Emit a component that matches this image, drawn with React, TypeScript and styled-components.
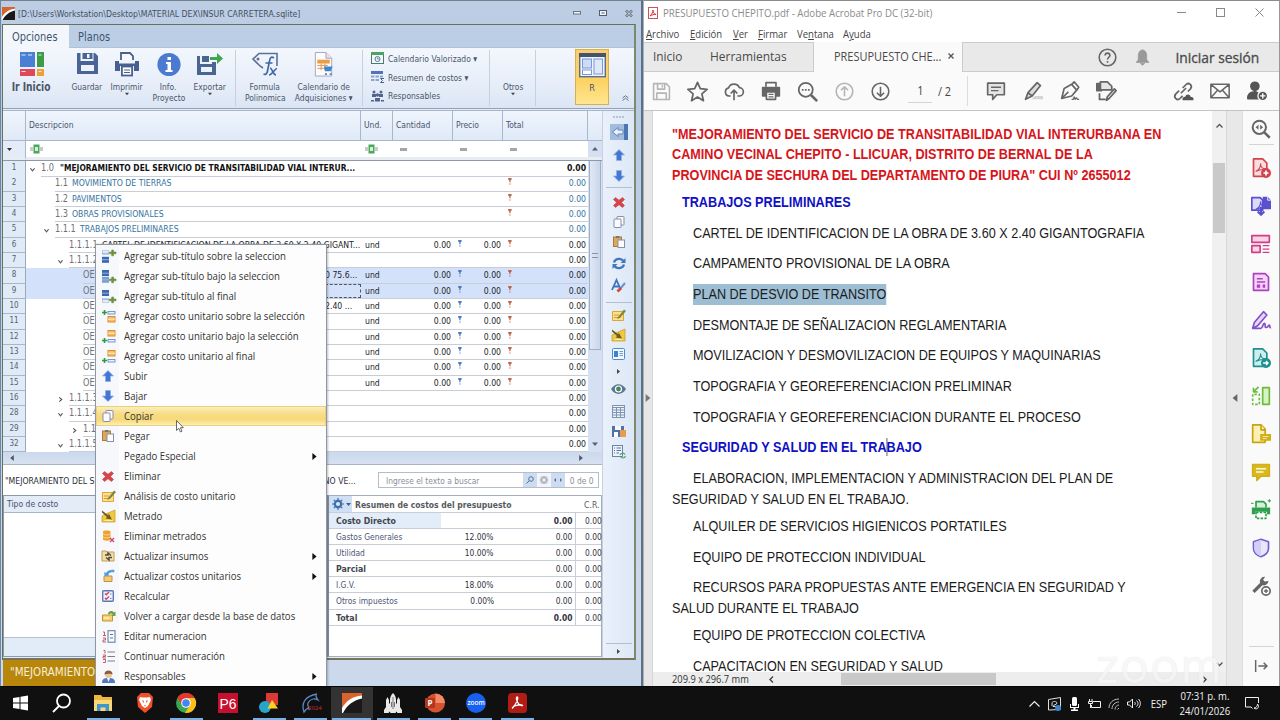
import React from "react";
import styled, { createGlobalStyle, css } from "styled-components";

const tahoma = `"DejaVu Sans Condensed", "DejaVu Sans", sans-serif`;
const segoe = `"Open Sans", "Noto Sans", sans-serif`;
const arial = `"Liberation Sans", Arial, sans-serif`;

const GlobalStyle = createGlobalStyle`
  * { box-sizing: border-box; }
  body { margin: 0; overflow: hidden; background: #101010; }
  svg { display: block; flex-shrink: 0; overflow: visible; }
`;

/* Text */
const Txt = styled.span<{ $k?: number; $from?: string }>`
  display: inline-block;
  white-space: nowrap;
  transform: scaleX(${(p) => p.$k ?? 0.91});
  transform-origin: ${(p) => p.$from ?? "left"} center;
`;

/* Screen */
const Screen = styled.div`
  width: 1280px;
  height: 720px;
  display: grid;
  grid-template-columns: 643px 637px;
  grid-template-rows: 686px 34px;
  overflow: hidden;
  position: relative;
`;

/* ---------- Budget window ---------- */
const BudgetWindow = styled.section`
  height: 686px;
  overflow: hidden;
  border-right: 2px solid #5c7088;
  border-left: 1px solid #6c86a6;
  border-top: 1px solid #73828f;
  background: linear-gradient(#bccde4, #b9cbe2 120px, #cdd9ea 600px, #cbd9ec);
  font-family: ${tahoma};
  font-size: 9.5px;
  color: #2b2f38;
`;
const BudgetTitle = styled.header`
  height: 23px;
  display: flex;
  align-items: center;
  padding: 1px 8px 0 1px;
  gap: 3px;
  color: #45505f;
`;
const TitleText = styled.div`
  flex: 1;
  font-size: 9.5px;
`;
const WinButtons = styled.div`
  display: flex;
  gap: 18px;
  align-items: center;
`;
const Frame = styled.div`
  width: 634px;
  height: 636px;
  margin-left: 1px;
  border: 1px solid #66735a;
  border-right: 2px solid #7d8a70;
  border-bottom: 2px solid #76745a;
  background: #e3ecf8;
  overflow: hidden;
`;
const TabStrip = styled.nav`
  height: 23px;
  display: flex;
  background: #bccee6;
  border-bottom: 1px solid #b0c2da;
  font-size: 12px;
`;
const Tab = styled.div<{ $active?: boolean }>`
  height: 23px;
  width: ${(p) => (p.$active ? 66 : 60)}px;
  padding: 5px 0 0 9px;
  line-height: 15px;
  color: #3f5570;
  background: ${(p) => (p.$active ? "#f3f7fc" : "transparent")};
`;
const Ribbon = styled.div`
  height: 61px;
  display: flex;
  background: linear-gradient(#f3f7fd, #e7eef9 60%, #dbe5f4);
  border-bottom: 1px solid #94a2b8;
  color: #4a5568;
`;
const RibbonButton = styled.div<{ $w: number; $ml?: number; $bold?: boolean }>`
  width: ${(p) => p.$w}px;
  margin-left: ${(p) => p.$ml ?? 0}px;
  padding-top: 4px;
  display: flex;
  flex-direction: column;
  align-items: center;
  font-size: ${(p) => (p.$bold ? 11.5 : 9.2)}px;
  font-weight: ${(p) => (p.$bold ? "bold" : "normal")};
  line-height: 11px;
  text-align: center;
  > svg:first-child { margin-bottom: ${(p) => (p.$bold ? 5 : 4)}px; }
`;
const Divider = styled.i<{ $ml?: number }>`
  width: 1px;
  height: 56px;
  margin: 2px 0 0 ${(p) => p.$ml ?? 0}px;
  background: #c5d0e0;
`;
const RibbonList = styled.div`
  width: 118px;
  margin-left: 8px;
  padding-top: 1px;
`;
const RibbonListItem = styled.div`
  height: 18.7px;
  display: flex;
  align-items: center;
  gap: 4px;
  font-size: 9.3px;
`;
const ViewButton = styled.div`
  width: 34px;
  height: 56px;
  margin: 1px 0 0 39px;
  padding-top: 3px;
  display: flex;
  flex-direction: column;
  align-items: center;
  gap: 5px;
  border: 1px solid #dcae4c;
  background: linear-gradient(#f8cf70, #fbd263 55%, #ffe68f);
  font-size: 9px;
`;
const Collapse = styled.div`
  margin: 47px 0 0 13px;
`;
const Work = styled.div`
  height: 551px;
  display: flex;
  border-top: 1px solid #a8b5c8;
  margin-top: 1px;
`;
const WorkLeft = styled.div`
  width: 599px;
`;

/* Grid of budget items */
const cols = "23px 335px 32px 60px 50px 85px 14px";
const GridHead = styled.div`
  height: 30px;
  display: grid;
  grid-template-columns: ${cols};
  background: linear-gradient(#eff5fd, #dfe9f7);
  border-bottom: 1px solid #a9b7cb;
  color: #47536a;
`;
const HeadCell = styled.div`
  padding: 8px 0 0 3px;
  line-height: 12px;
  border-right: 1px solid #a9b7cb;
  overflow: hidden;
  font-size: 9.3px;
`;
const FilterRow = styled.div`
  height: 20px;
  display: grid;
  grid-template-columns: ${cols};
  background: #fff;
  border-bottom: 1px solid #8f98a5;
  > div {
    padding: 3px 0 0 4px;
    border-bottom: 3px solid #e8edf4;
  }
  > div:first-child {
    padding-top: 6px;
    background: #e3ecf8;
    border-right: 1px solid #a9b7cb;
  }
  > div:last-child { background: #d5e1f2; padding: 0; }
`;
const Dash = styled.i`
  display: block;
  width: 7px;
  height: 3px;
  margin: 4px 0 0 3px;
  background: #a2a7ad;
`;
const GridBody = styled.div`
  height: 291px;
  display: flex;
  background: #fff;
  overflow: hidden;
`;
const Rows = styled.div`
  width: 585px;
`;
const Row = styled.div<{ $sel?: boolean; $bold?: boolean; $blue?: boolean }>`
  height: 15.33px;
  display: grid;
  grid-template-columns: 23px 335px 32px 60px 50px 85px;
  line-height: 14.5px;
  background: ${(p) => (p.$sel ? "#d3e2fa" : "#fff")};
  color: ${(p) => (p.$blue ? "#35749f" : "#23252a")};
  ${(p) =>
    p.$bold &&
    css`
      font-weight: bold;
      color: #111;
    `}
`;
const RowNum = styled.div`
  background: #e1eaf7;
  border-right: 1px solid #9aa9bf;
  border-bottom: 1px solid #a9b7cb;
  color: #56626f;
  font-size: 8px;
  font-weight: normal;
  text-align: center;
`;
const Desc = styled.div<{ $indent: number }>`
  min-width: 0;
  display: flex;
  padding-left: ${(p) => p.$indent - 12}px;
  overflow: hidden;
`;
const Arrow = styled.div`
  width: 12px;
  padding: 6px 0 0 1px;
`;
const DescLine = styled.div`
  flex: 1;
  min-width: 0;
  display: flex;
  border-bottom: 1px solid #c9ced6;
`;
const Code = styled.span<{ $w: number }>`
  width: ${(p) => p.$w}px;
  flex-shrink: 0;
  color: #707276;
  font-weight: normal;
  font-size: 10px;
`;
const Cell = styled.div<{ $right?: boolean }>`
  padding: 0 2px 0 4px;
  border-bottom: 1px solid #c9ced6;
  display: flex;
  justify-content: ${(p) => (p.$right ? "space-between" : "flex-start")};
  > svg { margin: 2px 0 0 1px; }
`;
const Tail = styled.div<{ $focus?: boolean }>`
  width: 36px;
  height: 14.5px;
  margin-left: auto;
  ${(p) => p.$focus && "border: 1px dashed #4a5568; border-left: 0;"}
`;
const VScroll = styled.div`
  width: 14px;
  height: 291px;
  background: #d5e1f2;
  display: flex;
  flex-direction: column;
  align-items: center;
  justify-content: space-between;
`;
const VThumb = styled.div`
  width: 12px;
  height: 189px;
  display: flex;
  align-items: center;
  justify-content: center;
  background: linear-gradient(90deg, #dfe8f6, #c9d6ea);
  border: 1px solid #9fb0c9;
  border-top: 0;
`;
const Grip = styled.i`
  width: 6px;
  height: 5px;
  border: solid #8393ad;
  border-width: 1px 0;
`;
const HScroll = styled.div`
  height: 13px;
  display: flex;
  justify-content: space-between;
  align-items: center;
  padding: 0 18px 0 6px;
  background: linear-gradient(#cbd9ed, #d7e1f0);
  border-bottom: 1px solid #a9b4c4;
`;

/* Search strip and bottom panels */
const SearchRow = styled.div`
  height: 30px;
  background: #fff;
  display: flex;
  align-items: center;
  padding-left: 2px;
  font-size: 9.5px;
`;
const SearchTitle = styled.div`
  width: 373px;
  display: flex;
`;
const SearchBox = styled.div`
  width: 221px;
  height: 16px;
  display: flex;
  align-items: center;
  border: 1px solid #b4bdc9;
  color: #8a8f96;
  font-size: 9.2px;
`;
const SearchInput = styled.div`
  width: 144px;
  padding-left: 7px;
`;
const SearchBtn = styled.div<{ $on?: boolean }>`
  width: 14px;
  height: 14px;
  display: grid;
  place-items: center;
  background: ${(p) => (p.$on ? "#cddcf0" : "#f1f4f8")};
`;
const Panels = styled.div`
  display: flex;
  height: 162px;
`;
const CostType = styled.div`
  width: 325px;
  height: 162px;
  background: #fff;
  border: 1px solid #8c99ab;
  display: flex;
  flex-direction: column;
  justify-content: space-between;
`;
const CostTypeHead = styled.div`
  height: 17px;
  line-height: 15px;
  padding-left: 3px;
  background: #e4ecf8;
  border-bottom: 1px solid #a9b7cb;
  color: #47536a;
  font-size: 9.4px;
`;
const CostTypeFoot = styled.div`
  height: 19px;
  background: #e2ebf8;
  border-top: 1px solid #b6bfcc;
`;
const Summary = styled.div`
  width: 274px;
  height: 162px;
  background: #fff;
  border: 1px solid #a4afbd;
  border-left: 1px solid #8793a3;
`;
const SummaryHead = styled.div`
  height: 17px;
  display: flex;
  align-items: center;
  border-bottom: 1px solid #c9ced6;
  color: #555a61;
`;
const SummaryTitle = styled.div`
  width: 230px;
  margin-left: 3px;
  font-weight: bold;
`;
const SummaryName = styled.b`
  display: inline-block;
  transform: scaleX(0.95);
  transform-origin: left center;
  color: #42464c;
`;
const Gear = styled.div`
  width: 23px;
  height: 16px;
  display: flex;
  align-items: center;
  gap: 2px;
  padding-left: 3px;
  background: #cfdff4;
`;
const SummaryRow = styled.div<{ $first?: boolean }>`
  height: 16.1px;
  display: grid;
  grid-template-columns: 112px 53px 82px 26px;
  line-height: 15px;
  border-bottom: 1px solid #c9ced6;
  font-size: 9.2px;
  color: #30353d;
  > div { overflow: hidden; }
  > div:first-child {
    padding-left: 7px;
    color: #4b5577;
    background: ${(p) => (p.$first ? "#e3ecf9" : "#fff")};
  }
  > div:nth-child(2), > div:nth-child(3) { text-align: right; }
  > div:nth-child(3) {
    padding-right: 3px;
    border-right: 1px solid #c9ced6;
  }
  > div:last-child { padding-left: 9px; }
`;
const SideBar = styled.aside`
  width: 32px;
  height: 548px;
  padding-top: 3px;
  background: linear-gradient(90deg, #eaf1fb, #dde7f6);
  border-left: 1px solid #c5d1e2;
  display: flex;
  flex-direction: column;
  align-items: center;
`;
const SideSlot = styled.div<{ $h: number; $line?: boolean }>`
  width: 26px;
  height: ${(p) => p.$h}px;
  flex-shrink: 0;
  display: grid;
  place-items: center;
  border-bottom: ${(p) => (p.$line ? "1px solid #b3bfd1" : "0")};
`;
const StatusBar = styled.footer`
  width: 310px;
  height: 26px;
  margin: 0 0 0 2px;
  padding: 5px 0 0 7px;
  background: #b8860b;
  color: #f7efd9;
  font-size: 12px;
`;

/* ---------- Context menu ---------- */
const Menu = styled.ul`
  position: absolute;
  left: 95px;
  top: 244px;
  width: 232px;
  height: 442px;
  margin: 0;
  padding: 1px 0 0;
  list-style: none;
  background: linear-gradient(90deg, #f6f8fb 23px, #fdfdfd 23px);
  border: 1px solid #8d97a5;
  border-bottom: 0;
  box-shadow: 1px 0 2px rgba(0, 0, 0, 0.25);
  font-family: ${segoe};
  font-size: 10.6px;
  color: #333;
`;
const MenuItem = styled.li<{ $hot?: boolean }>`
  height: 20px;
  display: flex;
  align-items: center;
  padding: 0 7px 0 5px;
  border: 1px solid transparent;
  > span { flex: 1; min-width: 0; }
  ${(p) =>
    p.$hot &&
    css`
      border-color: #e9cf7e;
      background: linear-gradient(#fbeebb, #f8dc85 40%, #f6d978 70%, #fdeeb4);
    `}
`;
const MenuIcon = styled.div`
  width: 21.5px;
  height: 16px;
  flex-shrink: 0;
  display: flex;
  align-items: center;
`;
const Pointer = styled.svg`
  position: absolute;
  left: 176px;
  top: 420px;
`;

/* ---------- Acrobat window ---------- */
const Acrobat = styled.section`
  height: 686px;
  overflow: hidden;
  background: #fff;
  border-left: 1px solid #a9b0b8;
  border-right: 1px solid #979797;
  border-top: 1px solid #8b8b8b;
  font-family: ${segoe};
  color: #444;
  display: flex;
  flex-direction: column;
`;
const AcroTitle = styled.header`
  height: 24px;
  display: flex;
  align-items: center;
  padding: 0 15px 1px 4px;
  gap: 5px;
  font-size: 11px;
  color: #8b8b8b;
  > span { flex: 1; }
`;
const AcroWin = styled.div`
  display: flex;
  align-items: center;
  gap: 30px;
`;
const AcroMenu = styled.nav`
  height: 17px;
  padding-left: 2px;
  display: grid;
  grid-template-columns: 44px 43px 25px 39px 46px 60px;
  line-height: 18px;
  font-size: 10.5px;
  color: #444;
`;
const AcroTabs = styled.nav`
  height: 30px;
  display: flex;
  align-items: center;
  background: #e9e9e9;
  border-top: 1px solid #cbcbcb;
  border-bottom: 1px solid #cbcbcb;
  font-size: 13px;
  color: #4a4a4a;
`;
const AcroTab = styled.div<{ $w: number; $pad: number; $active?: boolean }>`
  width: ${(p) => p.$w}px;
  height: 30px;
  padding: 0 0 2px ${(p) => p.$pad}px;
  display: flex;
  align-items: center;
  ${(p) =>
    p.$active &&
    css`
      background: #fafafa;
      border-left: 1px solid #cbcbcb;
      border-right: 1px solid #cbcbcb;
      font-size: 12.4px;
    `}
`;
const TabName = styled.div`
  width: 114px;
`;
const SignIn = styled.div`
  margin-left: 15px;
  font-size: 13.8px;
  -webkit-text-stroke: 0.3px #4a4a4a;
`;
const AcroTools = styled.div`
  height: 39px;
  display: flex;
  align-items: center;
  background: #fafafa;
  border-bottom: 1px solid #c4c4c4;
  font-size: 12px;
`;
const Tool = styled.div<{ $ml?: number }>`
  width: 36.6px;
  margin-left: ${(p) => p.$ml ?? 0}px;
  display: grid;
  place-items: center;
`;
const PageNo = styled.div`
  width: 24px;
  height: 24px;
  margin-left: 9px;
  line-height: 24px;
  text-align: center;
  border-bottom: 1px solid #d4d4d4;
`;
const PageTotal = styled.div`
  width: 17px;
  margin-left: 6px;
`;
const ToolDivider = styled.i`
  width: 1px;
  height: 30px;
  margin-left: 12px;
  background: #dcdcdc;
`;
const AcroBody = styled.div`
  flex: 1;
  display: flex;
  min-height: 0;
`;
const NavStrip = styled.div`
  width: 9px;
  background: #e6e6e6;
  border-right: 1px solid #d5d5d5;
  padding-top: 283px;
`;
const PageArea = styled.div`
  width: 573px;
`;
const PageRow = styled.div`
  height: 561px;
  display: flex;
  overflow: hidden;
`;
const Page = styled.article`
  width: 559px;
  padding: 13.8px 0 0 19px;
  background: #fff;
  font-family: ${arial};
  color: #1c1c1c;
`;
const Line = styled.p<{ $tone?: "red" | "blue"; $gap?: number; $in?: number }>`
  width: 600px;
  height: 20.4px;
  margin: ${(p) => p.$gap ?? 0}px 0 0;
  padding-left: ${(p) => p.$in ?? 0}px;
  font-size: 13.8px;
  line-height: 20.4px;
  white-space: nowrap;
  ${(p) => p.$tone === "red" && "color: #d8141a; font-weight: bold;"}
  ${(p) => p.$tone === "blue" && "color: #1010c4; font-weight: bold;"}
`;
const Marked = styled.mark`
  padding: 3px 0;
  background: #9dbdd3;
  color: inherit;
`;
const Caret = styled.i`
  display: inline-block;
  width: 1px;
  height: 18px;
  margin: 0 -1px -4px 0;
  vertical-align: baseline;
  background: #555;
`;
const PageScroll = styled.div`
  width: 14px;
  display: flex;
  flex-direction: column;
  align-items: center;
  background: #f0f0f0;
  padding: 12px 0 5px;
`;
const PageThumb = styled.div`
  width: 12px;
  height: 70px;
  margin: 35px 0 auto;
  background: #c9c9c9;
`;
const SizeRow = styled.footer`
  height: 14px;
  display: flex;
  align-items: center;
  background: #ededed;
  font-size: 10.5px;
  color: #333;
`;
const SizeText = styled.div`
  width: 116px;
  padding-left: 19px;
`;
const SizeThumb = styled.div`
  width: 155px;
  height: 12px;
  margin: 0 206px 0 67px;
  background: #c9c9c9;
`;
const Gutter = styled.div`
  width: 16px;
  background: #e8e8e8;
  border-left: 1px solid #d8d8d8;
  padding: 283px 0 0 4px;
`;
const ToolRail = styled.aside`
  flex: 1;
  background: #fafafa;
  border-left: 1px solid #dedede;
  display: flex;
  flex-direction: column;
  align-items: center;
`;
const RailSlot = styled.div`
  height: 38px;
  width: 25px;
  display: grid;
  place-items: center;
  flex-shrink: 0;
  &:first-child { border-bottom: 1px solid #d4d4d4; height: 34px; padding-top: 3px; margin-bottom: 4px; }
  &:last-child { border-top: 1px solid #d4d4d4; margin-top: 41px; }
`;
const Watermark = styled.div`
  position: absolute;
  left: 1096px;
  top: 638px;
  height: 47px;
  overflow: hidden;
  font: 50px/52px "Lato", sans-serif;
  letter-spacing: 2px;
  color: rgba(255, 255, 255, 0.75);
  text-shadow: 0 0 1px rgba(120, 120, 120, 0.25);
`;

/* ---------- Taskbar ---------- */
const Taskbar = styled.footer`
  grid-column: 1 / 3;
  background: #101010;
  border-top: 1px solid #060606;
  display: flex;
  color: #f2f2f2;
  font-family: ${segoe};
`;
const Task = styled.div<{ $open?: boolean; $hot?: boolean }>`
  width: 41.4px;
  height: 33px;
  display: flex;
  flex-direction: column;
  align-items: center;
  padding-top: 6px;
  justify-content: space-between;
  background: ${(p) => (p.$hot ? "#333" : "transparent")};
  &::after {
    content: "";
    width: ${(p) => (p.$hot ? "39px" : "33px")};
    height: 2px;
    background: ${(p) => (p.$open ? "#76b1e8" : "transparent")};
  }
`;
const Tray = styled.div`
  margin-left: auto;
  padding-right: 14px;
  display: flex;
  align-items: center;
  font-size: 10.5px;
`;
const TrayIcon = styled.div<{ $w: number }>`
  width: ${(p) => p.$w}px;
  display: grid;
  place-items: center;
`;
const Clock = styled.div`
  width: 64px;
  line-height: 15px;
  text-align: center;
  padding-top: 1px;
`;

/* ---------- Icons ---------- */
const Tri = ({ d = "down", s = 5, c = "#444" }: { d?: string; s?: number; c?: string }) => {
  const r: Record<string, number> = { down: 0, left: 90, up: 180, right: 270 };
  return (
    <svg width={s} height={s} viewBox="0 0 10 10">
      <path d="M0 2h10L5 8z" fill={c} transform={`rotate(${r[d]} 5 5)`} />
    </svg>
  );
};
const Chev = ({ open }: { open?: boolean }) => (
  <svg width="5" height="5" viewBox="0 0 6 6" fill="none" stroke="#555" strokeWidth="1.4">
    <path d={open ? "M.5 1.5 3 4.5 5.5 1.5" : "M1.5 .5 4.5 3 1.5 5.5"} />
  </svg>
);
const Pin = ({ c }: { c: string }) => (
  <svg width="4" height="7" viewBox="0 0 4 7">
    <path d="M.2 0h3.400v1.500L2.500 2.500v1.800h-1.200V2.500L.2 1.500zM1.300 5.400h1.200v1.200H1.300z" fill={c} opacity=".9" />
  </svg>
);
const AbcIcon = () => (
  <svg width="13" height="10" viewBox="0 0 13 10">
    <path d="M0 4h3M0 6h3M10 4h3M10 6h3" stroke="#8a9a8d" />
    <rect x="3.5" y=".5" width="6" height="9" fill="#4aa65a" />
    <rect x="5" y="3" width="3" height="4" fill="#d9f0dc" />
  </svg>
);
const InsurLogo = ({ s = 13 }: { s?: number }) => (
  <svg width={s} height={s} viewBox="0 0 20 20">
    <rect width="20" height="20" fill="#1a1818" />
    <path d="M0 0h20v3C11 4 4 9 0 16z" fill="#d9632a" />
    <path d="M0 15C4 8 11 3 20 2.500v3C12 7 5 12 1 20H0z" fill="#fff" />
  </svg>
);
const SaveIcon = () => (
  <svg width="21" height="25" viewBox="0 -1 21 25">
    <path d="M0 0h3.500v8h13V0H18l3 3v18H0zM4 12v6h13v-6z" fill="#4a6494" fillRule="evenodd" />
    <path d="M5.500 0h10v6h-10zM10 1v4h2.500V1z" fill="#4a6494" fillRule="evenodd" />
  </svg>
);
const PrintIcon = () => (
  <svg width="24" height="25" viewBox="0 0 24 25">
    <path d="M6 8V1h9l3 3v4" fill="#f5f8fd" stroke="#4a5f8c" strokeWidth="1.8" />
    <path d="M0 9h4v2.500h16V9h4v10h-5v-5H5v5H0z" fill="#46608f" />
    <rect x="6.900" y="14.500" width="10.200" height="9" fill="#fff" stroke="#4a5f8c" strokeWidth="1.8" />
    <path d="M9 18h6M9 20.500h6" stroke="#4a5f8c" />
  </svg>
);
const InfoIcon = () => (
  <svg width="24" height="25" viewBox="0 0 24 25">
    <circle cx="12" cy="12.500" r="11.600" fill="#4b7bd1" />
    <path d="M10.500 5h3.500v3h-3.500zM9 10h5v8h1.500v2h-7v-2h2v-6H9z" fill="#fff" />
  </svg>
);
const ExportIcon = () => (
  <svg width="26" height="25" viewBox="0 0 26 25">
    <path d="M0 4h3v8h12v-2h4v13H0zM4 15v5h11v-5zM5 4h7v6H5z" fill="#4a6494" fillRule="evenodd" />
    <path d="M13 5h7V1l6 5.500-6 5.500V8h-7z" fill="#3fa64c" />
  </svg>
);
const HomeTiles = () => (
  <svg width="24" height="25" viewBox="0 0 24 25">
    <path d="M0 0h15v15H0z" fill="#4b7fd6" />
    <path d="M17 0h7v15h-7z" fill="#3f9c46" />
    <path d="M0 17h15v7H0z" fill="#e0475b" />
    <path d="M17 17h7v7h-7z" fill="#f0a033" />
    <path d="M1.500 3h4M8 3h4M18.500 3h3M1.500 19.500h4M18.500 19.500h3" stroke="#dfe9fb" strokeWidth="1.2" />
  </svg>
);
const FormulaIcon = () => (
  <svg width="26" height="25" viewBox="0 0 26 25">
    <path d="M11 16 8 14 1 7l6-5.500h18V14" fill="none" stroke="#5c7196" strokeWidth="1.6" />
    <circle cx="6" cy="7" r="1.500" fill="#5c7196" />
    <path d="M22 6c-3-2-4 0-4.500 3L15.500 19c-.5 3-2 4-4 3M13.500 11h7M18 16c2 0 3 7 6 7M25 16.500c-2 0-5 6.500-8 6.500" fill="none" stroke="#3f68a8" strokeWidth="1.7" />
  </svg>
);
const CalendarDoc = () => (
  <svg width="24" height="25" viewBox="0 0 24 26">
    <path d="M3 .5h11l6 6V25H3z" fill="#fbfbfd" stroke="#a9a3b4" />
    <path d="M14 .5v6h6" fill="#e5e2ec" stroke="#a9a3b4" />
    <path d="M5 8h13v4H5z" fill="#eb9d3f" />
    <path d="M5 14h11M5 17h8M9 12v7M13 12v7" stroke="#d99a55" />
    <path d="M12 15h9l-2 5h-6zM13 22h2v2h-2zM18 22h2v2h-2z" fill="#3f86cf" />
  </svg>
);
const ValorizadoIcon = () => (
  <svg width="13" height="12" viewBox="0 0 13 12">
    <rect x=".5" y=".5" width="12" height="11" fill="#f4f9f6" stroke="#4c7a72" />
    <path d="M0 0h13v3H0z" fill="#4aa364" />
    <circle cx="6.500" cy="7" r="2.500" fill="none" stroke="#5577a8" />
    <path d="M6.500 5.500V7H8" stroke="#5577a8" fill="none" strokeWidth=".8" />
  </svg>
);
const ResumenIcon = () => (
  <svg width="13" height="12" viewBox="0 0 13 12">
    <path d="M0 0h12v3H0z" fill="#4f74b8" />
    <path d="M0 4.500h3.500v2H0zM4.500 4.500H8v2H4.500zM9 4.500h3v2H9zM0 8h3.500v2H0zM4.500 8H8v2H4.500z" fill="#8ba5d2" />
    <path d="M13 7.500H9.500L11.500 9.500l-2 2H13" stroke="#4a5f8c" fill="none" />
  </svg>
);
const PeopleIcon = () => (
  <svg width="13" height="12" viewBox="0 0 13 12" fill="#50658c">
    <circle cx="3" cy="2" r="1.500" /><circle cx="10" cy="2" r="1.500" /><circle cx="6.500" cy="5" r="1.700" />
    <path d="M1 4h4v3H1zM8 4h4v3H8zM4 8h5v3.500H4zM0 10h3v1.500H0zM10 10h3v1.500h-3z" />
  </svg>
);
const LayoutIcon = () => (
  <svg width="27" height="25" viewBox="0 0 27 25">
    <rect x=".7" y=".7" width="25.600" height="23" fill="#eef3fc" stroke="#5a6d94" strokeWidth="1.4" />
    <path d="M0 0h27v4H0z" fill="#47536d" />
    <rect x="3.500" y="6" width="9" height="9" fill="#cfdcf6" stroke="#7a98d6" />
    <rect x="15" y="6" width="8.500" height="15" fill="#dfe8fa" stroke="#7a98d6" />
    <rect x="3.500" y="17" width="9" height="4.500" fill="#fff" stroke="#7a98d6" />
  </svg>
);
const CollapseIcon = () => (
  <svg width="7" height="6" viewBox="0 0 7 6" fill="none" stroke="#64748b">
    <path d="M.5 3 3.500 .700 6.500 3M.5 5.500 3.500 3.200 6.500 5.500" />
  </svg>
);
const UpArrow = ({ down }: { down?: boolean }) => (
  <svg width="12" height="12" viewBox="0 0 12 12">
    <path d="M6 .5 11.500 6H8.500v5.500h-5V6H.5z" fill="#4377d3" stroke="#8fb0ea" strokeWidth=".8" transform={down ? "rotate(180 6 6)" : undefined} />
  </svg>
);
const RedX = () => (
  <svg width="12" height="11" viewBox="0 0 12 11">
    <path d="M2.500 .5 6 3.200 9.500 .5 11.500 2.500 8.500 5.500l3 3-2 2L6 7.700 2.500 10.500l-2-2 3-3-3-3z" fill="#d7444a" stroke="#b9353a" strokeWidth=".5" />
  </svg>
);
const CopyIcon = () => (
  <svg width="12" height="12" viewBox="0 0 12 12" fill="#fafaff" stroke="#8a8fa8">
    <rect x="4" y=".5" width="7" height="8.500" rx=".5" /><rect x="1" y="3" width="7" height="8.500" rx=".5" />
  </svg>
);
const PasteIcon = () => (
  <svg width="12" height="12" viewBox="0 0 12 12">
    <rect x=".5" y="1" width="8" height="9.500" fill="#dba85a" stroke="#a97c3c" />
    <path d="M3 0h3.500v2H3z" fill="#777" />
    <rect x="5" y="4" width="6.500" height="7.500" fill="#fdfdff" stroke="#8a8fa8" />
  </svg>
);
const RefreshIcon = () => (
  <svg width="14" height="13" viewBox="0 0 14 13" fill="none" stroke="#4078b8" strokeWidth="2.200">
    <path d="M2 5.500C3 1.500 9 .5 11.500 4M12 7.500c-1 4-7 5-9.500 1.500" />
    <path d="M13.500 1v5h-5zM.5 12V7h5z" fill="#4078b8" stroke="none" />
  </svg>
);
const TextBrush = () => (
  <svg width="15" height="14" viewBox="0 0 15 14" fill="none">
    <path d="M1 11 5.500 1 9 9M3 7.500h5" stroke="#3d74c2" strokeWidth="1.800" />
    <path d="m9 10 5-6" stroke="#6b93cf" strokeWidth="2" /><path d="m6.500 12.500 3.500-3.500" stroke="#d4473f" strokeWidth="2.800" />
  </svg>
);
const NotePencil = () => (
  <svg width="14" height="12" viewBox="0 0 14 12">
    <path d="M.5 2.500h11v9H.5z" fill="#fbe28a" stroke="#dfa437" />
    <path d="M2 6h5M2 8.500h4" stroke="#dd9640" />
    <path d="m5.500 8.500 6.500-8L14 2 8 9l-3 .7z" fill="#7e8b3c" />
  </svg>
);
const Metrado = () => (
  <svg width="13" height="12" viewBox="0 0 13 12">
    <path d="M0 12V6l5-2.500L13 0v12z" fill="#f0c93c" stroke="#c59a20" strokeWidth=".7" />
    <path d="m0 .500 6.500 5V3l3.500 6.500-6.500-1L5 7 0 2.500z" fill="#6c5a2b" />
    <path d="M2.500 10.500h8" stroke="#fdeea4" />
  </svg>
);
const FormIcon = () => (
  <svg width="13" height="12" viewBox="0 0 13 12">
    <rect x=".5" y=".5" width="12" height="11" rx="1" fill="#f1f7fe" stroke="#4b8dd0" />
    <path d="M2 3h4v6H2z" fill="#3f82cc" /><path d="M7.500 3.500H11M7.500 5.500H11M7.500 7.500H11" stroke="#6ba0d9" />
  </svg>
);
const EyeIcon = () => (
  <svg width="15" height="10" viewBox="0 0 15 10">
    <path d="M0 5C4-1.500 11-1.500 15 5 11 11.500 4 11.500 0 5z" fill="#5d7593" />
    <circle cx="7.500" cy="5" r="3.600" fill="#fff" /><circle cx="7.500" cy="5" r="2.400" fill="#3d8a5c" />
  </svg>
);
const TableIcon = () => (
  <svg width="13" height="13" viewBox="0 0 13 13" fill="#eef2f9" stroke="#7f93b4">
    <rect x=".5" y=".5" width="12" height="12" />
    <path d="M0 2.500h13M.5 5h12M.5 7.500h12M.5 10h12M4.500 2.500v10M8.500 2.500v10" />
  </svg>
);
const SaveDb = () => (
  <svg width="14" height="13" viewBox="0 0 14 13">
    <path d="M0 1h12v11H0z" fill="#54719f" /><path d="M3 1h6v4H3z" fill="#f3f6fb" />
    <path d="M8 5h6v7H8z" fill="#e99a4e" /><path d="M2 7h4v5H2z" fill="#fff" />
  </svg>
);
const ListSync = () => (
  <svg width="14" height="14" viewBox="0 0 14 14" fill="none">
    <rect x=".5" y=".5" width="10" height="11" fill="#eef3fb" stroke="#6e83a8" />
    <path d="M2 3h1M4.500 3H9M2 5.500h1M4.500 5.500H9M2 8h1M4.500 8H7" stroke="#5573a8" />
    <path d="M8 10c1-2.500 4-2.500 5-.5M13.500 11c-1 2.500-4 2.500-5 .8" stroke="#4ba75a" strokeWidth="1.200" />
  </svg>
);
const DockIcon = () => (
  <svg width="18" height="16" viewBox="0 0 18 16">
    <path d="M0 0h18v16H0z" fill="#a3bcdd" /><path d="M14 0h4v16h-4z" fill="#4b76b4" />
    <path d="M8 3.500 2.500 8 8 12.500V10h5V6H8z" fill="#e8f0fb" stroke="#6285bb" />
  </svg>
);
const SubtitleIcon = ({ v }: { v: number }) => (
  <svg width="14" height="13" viewBox="0 0 14 13">
    {v === 0 ? (
      <rect x=".5" y=".5" width="6" height="4" fill="#eef3fb" stroke="#8ba2c8" strokeDasharray="1 1" />
    ) : (
      <path d="M0 0h7v6H0z" fill="#3c68b0" />
    )}
    {v === 2 ? (
      <rect x=".5" y="8.500" width="6" height="4" fill="#eef3fb" stroke="#8ba2c8" strokeDasharray="1 1" />
    ) : (
      <path d="M0 6.800h7v6H0z" fill={v ? "#7ba0d8" : "#3c68b0"} />
    )}
    <path d="M0 3.200h7M0 9.700h7" stroke="#8fb0e2" />
    <path d="M9.700 0h1.800v2H14v1.800h-2.500v2H9.700v-2H7.500V2h2.200z" fill="#6f8f3f" stroke="#6f8f3f" strokeWidth=".6" transform={v ? "translate(0 7)" : undefined} />
  </svg>
);
const CostIcon = ({ v }: { v: number }) => (
  <svg width="14" height="13" viewBox="0 0 14 13">
    <g transform={v ? "translate(0 8)" : undefined}>
      <path d="M0 2.500h5M2.500 0v5" stroke="#2e9a41" strokeWidth="1.600" />
      <rect x="6" y="1.500" width="7" height="2.500" fill="#eaf1fb" stroke="#6a8fc9" strokeWidth=".9" />
    </g>
    <g transform={v ? undefined : "translate(0 6)"}>
      <rect x="6" y=".5" width="7" height="5.500" fill="#f6bd63" stroke="#dc8f2c" />
      <path d="M6 3.200h7" stroke="#fff1d4" />
    </g>
  </svg>
);
const DbDelete = () => (
  <svg width="13" height="13" viewBox="0 0 13 13">
    <path d="M1 1.500C1 0 8.500 0 8.500 1.500v8C8.500 11 1 11 1 9.500z" fill="#f0a02c" />
    <path d="M1 4c2 1.200 5.500 1.200 7.500 0M1 7c2 1.200 5.500 1.200 7.500 0" stroke="#fbd794" fill="none" />
    <path d="m8 8 4 4M12 8l-4 4" stroke="#cf4a6b" strokeWidth="1.400" />
  </svg>
);
const InsumoIcon = () => (
  <svg width="13" height="12" viewBox="0 0 13 12">
    <path d="M0 1h4l1 1h7v9H0z" fill="#f3dfa6" stroke="#c29a55" />
    <path d="M3 5h3V3l3 2.500M10 7.500H7V10L4 7.500" fill="none" stroke="#4c4a3e" strokeWidth="1.400" />
  </svg>
);
const CostRefresh = () => (
  <svg width="13" height="12" viewBox="0 0 13 12">
    <path d="M2 6h8v5.500H2z" fill="#f1ca7a" stroke="#c8923a" />
    <path d="M12 0C8 0 5 1 4 3.500L2.500 2.500 3 6l4-1-1.300-.8C7 2.500 9 1.500 12 2z" fill="#4d97da" stroke="#4d97da" strokeWidth=".6" />
  </svg>
);
const CheckPage = () => (
  <svg width="12" height="12" viewBox="0 0 12 12">
    <rect x=".7" y=".7" width="10.600" height="10.600" rx="1" fill="#eef2fb" stroke="#5c78b8" strokeWidth="1.400" />
    <path d="m3 3.500 1.200 1.200L7 2M3 8l1.200 1.200L7 6.500" stroke="#d0455f" fill="none" strokeWidth="1.400" />
    <path d="M8 4h1.500M8 8.500h1.500" stroke="#6c86bd" />
  </svg>
);
const DbReload = () => (
  <svg width="14" height="12" viewBox="0 0 14 12">
    <path d="M.5 5h10v6H.5z" fill="#f6d26b" stroke="#c49332" /><path d="M2 8h5" stroke="#fff7dc" strokeWidth="1.400" />
    <path d="M6 4c0-3 4-4 6-1.500L13.500 1.500V6H9.500l1.300-1.500C9.500 3 8 3 7.500 4.500z" fill="#6f9f43" />
  </svg>
);
const NumEdit = () => (
  <svg width="14" height="13" viewBox="0 0 14 13" fill="none">
    <path d="M1 2h1.500v3.500M1 5.500h3M1 8h2.500v2H1v2h3" stroke="#c45b6c" />
    <rect x="6" y=".7" width="7" height="11.500" fill="#f6f9fe" stroke="#58789c" /><path d="M8 4.500h3M8 8h3" stroke="#58789c" />
  </svg>
);
const NumList = () => (
  <svg width="14" height="13" viewBox="0 0 14 13" fill="none">
    <path d="M1.500.5H3v3M1 5h2.500v1.500H1V8h3M1 9.500h2.500v3H1" stroke="#c45b6c" />
    <path d="M5.500 2H13M5.500 6.500H13M5.500 11H13" stroke="#7b8189" strokeWidth="1.200" />
  </svg>
);
const Person = () => (
  <svg width="13" height="13" viewBox="0 0 13 13">
    <path d="M0 13c0-4 2-5 6.500-5s6.500 1 6.500 5z" fill="#5278bd" /><path d="M5 8h3l-1.500 4z" fill="#fff" />
    <circle cx="6.500" cy="4.500" r="3.500" fill="#ecc49a" /><path d="M2.500 4.500C2-1 11-1 10.500 4.500 9 3 5 4 2.500 4.500z" fill="#8a5f37" />
  </svg>
);

/* Acrobat icons, 24 unit grid */
const A = ({ children, c = "#666", s = 20, w = 2, f = "none" }: { children: React.ReactNode; c?: string; s?: number; w?: number; f?: string }) => (
  <svg width={s} height={s} viewBox="0 0 24 24" fill={f} stroke={c} strokeWidth={w} strokeLinejoin="round">
    {children}
  </svg>
);
const PdfGlyph = ({ c }: { c: string }) => (
  <path d="M6 16c4-2 5.500-6 5.500-9 0 3 2 6 6 6.500-4 0-8 1-11.500 2.500z" stroke={c} strokeWidth="1.300" fill="none" />
);

/* ---------- Data ---------- */
interface IRow {
  n: string;
  code: string;
  cw?: number;
  text?: string;
  indent: number;
  arrow?: "open" | "closed";
  kind?: "bold" | "blue" | "item";
  pin?: boolean;
  sel?: boolean;
  tail?: string;
}
const rows: IRow[] = [
  { n: "1", code: "1.0", cw: 19, text: '"MEJORAMIENTO DEL SERVICIO DE TRANSITABILIDAD VIAL INTERUR...', indent: 15, arrow: "open", kind: "bold" },
  { n: "2", code: "1.1", cw: 17, text: "MOVIMIENTO DE TIERRAS", indent: 29, kind: "blue", pin: true },
  { n: "3", code: "1.2", cw: 17, text: "PAVIMENTOS", indent: 29, kind: "blue", pin: true },
  { n: "4", code: "1.3", cw: 17, text: "OBRAS PROVISIONALES", indent: 29, kind: "blue", pin: true },
  { n: "5", code: "1.1.1", cw: 25, text: "TRABAJOS PRELIMINARES", indent: 29, arrow: "open", kind: "blue" },
  { n: "6", code: "1.1.1.1", cw: 33, text: "CARTEL DE IDENTIFICACION DE LA OBRA DE 3.60 X 2.40 GIGANT...", indent: 43, kind: "item" },
  { n: "7", code: "1.1.1.2", indent: 43, arrow: "open" },
  { n: "8", code: "OE", indent: 57, kind: "item", sel: true, tail: "0 75.6..." },
  { n: "9", code: "OE", indent: 57, kind: "item", sel: true, tail: "focus" },
  { n: "10", code: "OE", indent: 57, kind: "item", tail: " 2.40 ..." },
  { n: "11", code: "OE", indent: 57, kind: "item" },
  { n: "12", code: "OE", indent: 57, kind: "item" },
  { n: "13", code: "OE", indent: 57, kind: "item" },
  { n: "14", code: "OE", indent: 57, kind: "item" },
  { n: "15", code: "OE", indent: 57, kind: "item" },
  { n: "16", code: "1.1.1.3", indent: 43, arrow: "closed" },
  { n: "28", code: "1.1.1.4", indent: 43, arrow: "open" },
  { n: "29", code: "1.1", indent: 57, arrow: "closed" },
  { n: "32", code: "1.1.1.5", indent: 43, arrow: "open" },
];

const summary = [
  ["Costo Directo", "", "0.00", "b"],
  ["Gastos Generales", "12.00%", "0.00", ""],
  ["Utilidad", "10.00%", "0.00", ""],
  ["Parcial", "", "0.00", "h"],
  ["I.G.V.", "18.00%", "0.00", ""],
  ["Otros impuestos", "0.00%", "0.00", ""],
  ["Total", "", "0.00", "b"],
];

const menu: { label: string; icon?: React.ReactNode; sub?: boolean }[] = [
  { label: "Agregar sub-título sobre la seleccion", icon: <SubtitleIcon v={0} /> },
  { label: "Agregar sub-título bajo la seleccion", icon: <SubtitleIcon v={1} /> },
  { label: "Agregar sub-título al final", icon: <SubtitleIcon v={2} /> },
  { label: "Agregar costo unitario sobre la selección", icon: <CostIcon v={0} /> },
  { label: "Agregar costo unitario bajo la selección", icon: <CostIcon v={1} /> },
  { label: "Agregar costo unitario al final", icon: <CostIcon v={2} /> },
  { label: "Subir", icon: <UpArrow /> },
  { label: "Bajar", icon: <UpArrow down /> },
  { label: "Copiar", icon: <CopyIcon /> },
  { label: "Pegar", icon: <PasteIcon /> },
  { label: "Pegado Especial", sub: true },
  { label: "Eliminar", icon: <RedX /> },
  { label: "Análisis de costo unitario", icon: <NotePencil /> },
  { label: "Metrado", icon: <Metrado /> },
  { label: "Eliminar metrados", icon: <DbDelete /> },
  { label: "Actualizar insumos", icon: <InsumoIcon />, sub: true },
  { label: "Actualizar costos unitarios", icon: <CostRefresh />, sub: true },
  { label: "Recalcular", icon: <CheckPage /> },
  { label: "Volver a cargar desde la base de datos", icon: <DbReload /> },
  { label: "Editar numeracion", icon: <NumEdit /> },
  { label: "Continuar numeración", icon: <NumList /> },
  { label: "Responsables", icon: <Person />, sub: true },
];

const docLines: { t: string; tone?: "red" | "blue"; gap?: number; ind?: number; mark?: boolean }[] = [
  { t: '"MEJORAMIENTO DEL SERVICIO DE TRANSITABILIDAD VIAL INTERURBANA EN', tone: "red" },
  { t: "CAMINO VECINAL CHEPITO - LLICUAR, DISTRITO DE BERNAL DE LA", tone: "red" },
  { t: 'PROVINCIA DE SECHURA DEL DEPARTAMENTO DE PIURA" CUI Nº 2655012', tone: "red" },
  { t: "TRABAJOS PRELIMINARES", tone: "blue", gap: 7, ind: 10 },
  { t: "CARTEL DE IDENTIFICACION DE LA OBRA DE 3.60 X 2.40 GIGANTOGRAFIA", gap: 10.3, ind: 21 },
  { t: "CAMPAMENTO PROVISIONAL DE LA OBRA", gap: 10.3, ind: 21 },
  { t: "PLAN DE DESVIO DE TRANSITO", gap: 10.3, ind: 21, mark: true },
  { t: "DESMONTAJE DE SEÑALIZACION REGLAMENTARIA", gap: 10.3, ind: 21 },
  { t: "MOVILIZACION Y DESMOVILIZACION DE EQUIPOS Y MAQUINARIAS", gap: 10.3, ind: 21 },
  { t: "TOPOGRAFIA Y GEOREFERENCIACION PRELIMINAR", gap: 10.3, ind: 21 },
  { t: "TOPOGRAFIA Y GEOREFERENCIACION DURANTE EL PROCESO", gap: 10.3, ind: 21 },
  { t: "SEGURIDAD Y SALUD EN EL TRA|BAJO", tone: "blue", gap: 10.3, ind: 10 },
  { t: "ELABORACION, IMPLEMENTACION Y ADMINISTRACION DEL PLAN DE", gap: 10.3, ind: 21 },
  { t: "SEGURIDAD Y SALUD EN EL TRABAJO." },
  { t: "ALQUILER DE SERVICIOS HIGIENICOS PORTATILES", gap: 7.1, ind: 21 },
  { t: "EQUIPO DE PROTECCION INDIVIDUAL", gap: 10.3, ind: 21 },
  { t: "RECURSOS PARA PROPUESTAS ANTE EMERGENCIA EN SEGURIDAD Y", gap: 10.3, ind: 21 },
  { t: "SALUD DURANTE EL TRABAJO" },
  { t: "EQUIPO DE PROTECCION COLECTIVA", gap: 7.1, ind: 21 },
  { t: "CAPACITACION EN SEGURIDAD Y SALUD", gap: 10.3, ind: 21 },
];

/* ---------- Components ---------- */
function ItemRow({ r }: { r: IRow }) {
  const item = r.kind === "item";
  return (
    <Row $sel={r.sel} $bold={r.kind === "bold"} $blue={r.kind === "blue"}>
      <RowNum>{r.n}</RowNum>
      <Desc $indent={r.indent}>
        <Arrow>{r.arrow && <Chev open={r.arrow === "open"} />}</Arrow>
        <DescLine>
          <Code $w={r.cw ?? 40}>
            <Txt>{r.code}</Txt>
          </Code>
          {r.text && <Txt $k={r.kind === "bold" ? 0.882 : 0.91}>{r.text}</Txt>}
          {r.tail && (
            <Tail $focus={r.tail === "focus"}>{r.tail !== "focus" && <Txt>{r.tail}</Txt>}</Tail>
          )}
        </DescLine>
      </Desc>
      <Cell>{item && <Txt>und</Txt>}</Cell>
      <Cell $right>
        <i />
        {item && <Txt $from="right">0.00</Txt>}
      </Cell>
      <Cell $right>
        {item ? <Pin c="#3a6db5" /> : <i />}
        {item && <Txt $from="right">0.00</Txt>}
      </Cell>
      <Cell $right>
        {item || r.pin ? <Pin c="#b8523a" /> : <i />}
        <Txt $from="right">0.00</Txt>
      </Cell>
    </Row>
  );
}

function Budget() {
  return (
    <BudgetWindow>
      <BudgetTitle>
        <InsurLogo />
        <TitleText>
          <Txt $k={0.912}>[D:\Users\Workstation\Desktop\MATERIAL DEX\INSUR CARRETERA.sqlite]</Txt>
        </TitleText>
        <WinButtons>
          <svg width="8" height="4" viewBox="0 0 8 4"><rect x=".5" y=".5" width="7" height="2.500" fill="#f1f5fa" stroke="#6a7482" /></svg>
          <svg width="8" height="6" viewBox="0 0 8 6"><rect x=".5" y=".5" width="7" height="5" fill="#f1f5fa" stroke="#525c6a" /><path d="M2.500 2.500h3v1h-3z" fill="#525c6a" /></svg>
          <svg width="8" height="7" viewBox="0 0 8 7"><path d="m1 .500 6 6M7 .500l-6 6" stroke="#4e5866" strokeWidth="2.400" /><path d="m1 .500 6 6M7 .500l-6 6" stroke="#e9eff7" /></svg>
        </WinButtons>
      </BudgetTitle>
      <Frame>
        <TabStrip>
          <Tab $active><Txt>Opciones</Txt></Tab>
          <Tab><Txt>Planos</Txt></Tab>
        </TabStrip>
        <Ribbon>
          <RibbonButton $w={57} $bold>
            <HomeTiles />
            <Txt $k={0.88} $from="center">Ir Inicio</Txt>
          </RibbonButton>
          <RibbonButton $w={40} $ml={7}>
            <SaveIcon />
            <Txt $from="center">Guardar</Txt>
          </RibbonButton>
          <RibbonButton $w={40}>
            <PrintIcon />
            <Txt $from="center">Imprimir</Txt>
            <Tri s={4} />
          </RibbonButton>
          <RibbonButton $w={43}>
            <InfoIcon />
            <Txt $from="center">Info.</Txt>
            <Txt $from="center">Proyecto</Txt>
          </RibbonButton>
          <RibbonButton $w={40}>
            <ExportIcon />
            <Txt $from="center">Exportar</Txt>
            <Tri s={4} />
          </RibbonButton>
          <Divider $ml={5} />
          <RibbonButton $w={50} $ml={4}>
            <FormulaIcon />
            <Txt $from="center">Formula</Txt>
            <Txt $from="center">Polinomica</Txt>
          </RibbonButton>
          <RibbonButton $w={68}>
            <CalendarDoc />
            <Txt $from="center">Calendario de</Txt>
            <Txt $from="center">Adquisiciones ▾</Txt>
          </RibbonButton>
          <Divider $ml={4} />
          <RibbonList>
            <RibbonListItem><ValorizadoIcon /><Txt>Calendario Valorizado ▾</Txt></RibbonListItem>
            <RibbonListItem><ResumenIcon /><Txt>Resumen de costos ▾</Txt></RibbonListItem>
            <RibbonListItem><PeopleIcon /><Txt>Responsables</Txt></RibbonListItem>
          </RibbonList>
          <Divider />
          <RibbonButton $w={44} $ml={1}>
            <svg width="20" height="25" />
            <Txt $from="center">Otros</Txt>
            <Tri s={4} />
          </RibbonButton>
          <Divider />
          <ViewButton>
            <LayoutIcon />
            R
          </ViewButton>
          <Collapse><CollapseIcon /></Collapse>
        </Ribbon>
        <Work>
          <WorkLeft>
            <GridHead>
              <HeadCell />
              {["Descripcion", "Und.", "Cantidad", "Precio", "Total"].map((h) => (
                <HeadCell key={h}><Txt>{h}</Txt></HeadCell>
              ))}
              <div />
            </GridHead>
            <FilterRow>
              <div><Tri s={5} c="#333" /></div>
              <div><AbcIcon /></div>
              <div><AbcIcon /></div>
              <div><Dash /></div>
              <div><Dash /></div>
              <div><Dash /></div>
              <div><svg width="14" height="16" viewBox="0 0 14 16"><path d="M4 9.500h6L7 6z" fill="#555f70" /></svg></div>
            </FilterRow>
            <GridBody>
              <Rows>
                {rows.map((r) => <ItemRow key={r.n} r={r} />)}
              </Rows>
              <VScroll>
                <VThumb><Grip /></VThumb>
                <svg width="14" height="16" viewBox="0 0 14 16"><path d="M4 6.500h6L7 10z" fill="#555f70" /></svg>
              </VScroll>
            </GridBody>
            <HScroll>
              <Tri d="left" s={6} c="#4d5868" />
              <Tri d="right" s={6} c="#4d5868" />
            </HScroll>
            <SearchRow>
              <SearchTitle>
                <Txt $k={0.908}>"MEJORAMIENTO DEL SERVICIO DE TRANSITABILIDAD VIAL INTERURBANA EN CAMINO VE...</Txt>
              </SearchTitle>
              <SearchBox>
                <SearchInput><Txt>Ingrese el texto a buscar</Txt></SearchInput>
                <SearchBtn $on><svg width="8" height="8" viewBox="0 0 8 8" fill="none" stroke="#54709a"><circle cx="5" cy="3" r="2.300" /><path d="M3.300 4.700.500 7.500" /></svg></SearchBtn>
                <SearchBtn><svg width="8" height="8" viewBox="0 0 8 8"><circle cx="4" cy="4" r="4" fill="#b6bbc2" /><path d="m2.500 2.500 3 3M5.500 2.500l-3 3" stroke="#fff" /></svg></SearchBtn>
                <SearchBtn $on><svg width="8" height="4" viewBox="0 0 8 4" fill="#54709a"><path d="M0 2 2 0v4zM8 2 6 0v4z" /></svg></SearchBtn>
                <Txt>&nbsp; 0 de 0</Txt>
              </SearchBox>
            </SearchRow>
            <Panels>
              <CostType>
                <CostTypeHead><Txt>Tipo de costo</Txt></CostTypeHead>
                <CostTypeFoot />
              </CostType>
              <Summary>
                <SummaryHead>
                  <Gear>
                    <svg width="12" height="12" viewBox="0 0 12 12"><circle cx="6" cy="6" r="3.300" fill="none" stroke="#3f6fa8" strokeWidth="2" /><path d="M6 0v12M0 6h12M1.800 1.800l8.400 8.400M10.200 1.800l-8.400 8.400" stroke="#3f6fa8" strokeWidth="1.200" /><circle cx="6" cy="6" r="2" fill="#dbe7f7" /></svg>
                    <Tri s={5} c="#3f5f8a" />
                  </Gear>
                  <SummaryTitle><Txt $k={0.897}>Resumen de costos del presupuesto</Txt></SummaryTitle>
                  <Txt>C.R.</Txt>
                </SummaryHead>
                {summary.map(([name, pct, val, mode], i) => (
                  <SummaryRow key={name} $first={i === 0}>
                    <div>{mode ? <SummaryName>{name}</SummaryName> : <Txt>{name}</Txt>}</div>
                    <div><Txt $from="right">{pct}</Txt></div>
                    <div>{mode === "b" ? <Txt as="b" $from="right">{val}</Txt> : <Txt $from="right">{val}</Txt>}</div>
                    <div><Txt>0.00</Txt></div>
                  </SummaryRow>
                ))}
              </Summary>
            </Panels>
          </WorkLeft>
          <SideBar>
            <SideSlot $h={5}><svg width="11" height="2"><path d="M0 1h2M3 1h2M6 1h2M9 1h2" stroke="#8b9ab1" /></svg></SideSlot>
            <SideSlot $h={26}><DockIcon /></SideSlot>
            <SideSlot $h={20}><UpArrow /></SideSlot>
            <SideSlot $h={23} $line><UpArrow down /></SideSlot>
            <SideSlot $h={28}><RedX /></SideSlot>
            <SideSlot $h={12}><CopyIcon /></SideSlot>
            <SideSlot $h={28}><PasteIcon /></SideSlot>
            <SideSlot $h={14}><RefreshIcon /></SideSlot>
            <SideSlot $h={33} $line><TextBrush /></SideSlot>
            <SideSlot $h={23}><NotePencil /></SideSlot>
            <SideSlot $h={18}><Metrado /></SideSlot>
            <SideSlot $h={20}><FormIcon /></SideSlot>
            <SideSlot $h={14}><Tri d="right" s={5} /></SideSlot>
            <SideSlot $h={22}><EyeIcon /></SideSlot>
            <SideSlot $h={22}><TableIcon /></SideSlot>
            <SideSlot $h={18}><SaveDb /></SideSlot>
            <SideSlot $h={23}><ListSync /></SideSlot>
            <SideSlot $h={181} $line />
            <SideSlot $h={14}><Tri d="right" s={5} /></SideSlot>
          </SideBar>
        </Work>
      </Frame>
      <StatusBar><Txt $k={0.95}>"MEJORAMIENTO</Txt></StatusBar>
    </BudgetWindow>
  );
}

const railIcons = [
  <A key="z" w={2.4}><circle cx="10" cy="10" r="8" /><path d="m16 16 6.500 6.500" strokeWidth="3" /><path d="M9 7v6L5.500 10zM11 7v6l3.500-3z" fill="#666" stroke="none" /></A>,
  <A key="cr" c="#d0444e" f="#fbdcdf"><path d="M3 1h11l5 5v16H3z" /><PdfGlyph c="#d0444e" /><circle cx="18" cy="18" r="6" fill="#d0444e" stroke="none" /><path d="M18 15v6M15 18h6" stroke="#fff" /></A>,
  <A key="ex" c="#5a51cf" f="#dcd9fb"><path d="M14 1h6l4 4v11H14z" fill="#5a51cf" stroke="none" /><path d="M20 1v4h4" stroke="#fff" strokeWidth="1" fill="none" /><path d="M1 2h10l3 3v12H1z" /><PdfGlyph c="#5a51cf" /><path d="M12 13v9M8 18.500l4 4 4-4" strokeWidth="2.600" fill="none" /></A>,
  <A key="org" c="#cf3f86" f="#fad3e5"><path d="M1 2h21v8H1zM1 14h10v8H1z" /><path d="M14 14h8M14 18h8M14 22h8" strokeWidth="1.500" /></A>,
  <A key="form" c="#b03fc4" f="#f2d5f7"><path d="M3 2h14l4 4v16H3z" /><path d="M7 8h7M7 12h10" strokeWidth="1.700" /><path d="M7 15h4v4H7zM14 15h3v4h-3z" fill="#b03fc4" stroke="none" /></A>,
  <A key="sign" c="#8350c9" f="#e6d9f8"><path d="M2 22 4 15 15 2l4 4L8 19zM2 22h10c2 0 2-6 4-6s0 5 2 5 3-3 4-3 0 4 2 3" /></A>,
  <A key="send" c="#1f8f8f" f="#cdeeee"><path d="M3 1h11l5 5v16H3z" /><PdfGlyph c="#1f8f8f" /><circle cx="18" cy="18" r="6" fill="#1f8f8f" stroke="none" /><path d="M14.500 18h6M18 15.500l2.500 2.500-2.500 2.500" stroke="#fff" strokeWidth="1.600" fill="none" /></A>,
  <A key="cmp" c="#6dbb3c" f="#d8f3c2"><path d="M14 2h8v20h-8z" /><path d="M2 10v12h8V10z" strokeDasharray="3 2" fill="none" /><path d="m9 1-6 6M3 2v5h5" fill="none" /></A>,
  <A key="req" c="#c9a312" f="#fcf0b5"><path d="M2 1h10l5 5v16H2z" /><path d="M12 1v6h5" /><path d="M11 12h13v8h-5l-3 3v-3h-5z" fill="#d4ae16" stroke="none" /><path d="M14 15h7M14 17.500h5" stroke="#fff6cc" strokeWidth="1" /></A>,
  <A key="com" c="#d1b01c" f="#d9b920"><path d="M2 3h20v14H12l-5 5v-5H2z" /><path d="M6 8h12M6 12h9" stroke="#fff8d8" strokeWidth="1.800" /></A>,
  <A key="prn" c="#2f9f4c" f="#d3f2db"><path d="M6 9V2h9l3 3v4" /><path d="M1 9h22v8h-4v-3H5v3H1z" fill="#2f9f4c" stroke="none" /><path d="M6 15h12v7H6z" fill="#fff" strokeDasharray="3 1.500" /><path d="M0 4h3M20 1h4M22-1v4" strokeWidth="1.200" /></A>,
  <A key="prot" c="#6f62cf" f="#e9e6fb"><path d="M12 1.500 21 4.500v8c0 5-4 8-9 10-5-2-9-5-9-10v-8z" /><path d="M12 2v20c-5-2-8-5-8-9.500V5z" fill="#d4cff6" stroke="none" /></A>,
  <A key="more" w={4}><path d="m3 19 10-10" /><path d="M21 6a5.500 5.500 0 0 1-9 4 5.500 5.500 0 0 1 5-9l-2.500 3.500 2 2z" fill="#666" stroke="none" /><circle cx="18" cy="18" r="5" fill="#fff" strokeWidth="2" /><path d="M18 15.500v5M15.500 18h5" strokeWidth="1.600" /></A>,
  <A key="hide" s={16} w={2.2}><path d="M4 3v18M8 12h13M16 7l5 5-5 5" /></A>,
];

function AcrobatWindow() {
  return (
    <Acrobat>
      <AcroTitle>
        <svg width="10" height="12" viewBox="0 0 10 12"><rect x=".5" y=".5" width="9" height="11" fill="#fff" stroke="#c9545a" /><path d="M2 9c2-2 3-4 3-6 0 2 1 4 3 4.500C6 7 4 8 2 9z" fill="none" stroke="#d3303a" /></svg>
        <Txt $k={0.88}>PRESUPUESTO CHEPITO.pdf - Adobe Acrobat Pro DC (32-bit)</Txt>
        <AcroWin>
          <svg width="9" height="9"><path d="M0 4.500h9" stroke="#888" /></svg>
          <svg width="9" height="9"><rect x=".5" y=".5" width="8" height="8" fill="none" stroke="#888" /></svg>
          <svg width="9" height="9"><path d="m.5.5 8 8m0-8-8 8" stroke="#888" /></svg>
        </AcroWin>
      </AcroTitle>
      <AcroMenu>
        {["Archivo", "Edición", "Ver", "Firmar"].map((m) => (
          <Txt key={m}><u>{m[0]}</u>{m.slice(1)}</Txt>
        ))}
        <Txt>Ve<u>n</u>tana</Txt>
        <Txt>A<u>y</u>uda</Txt>
      </AcroMenu>
      <AcroTabs>
        <AcroTab $w={66} $pad={9}><Txt>Inicio</Txt></AcroTab>
        <AcroTab $w={103} $pad={0}><Txt $k={0.92}>Herramientas</Txt></AcroTab>
        <AcroTab $w={150} $pad={20} $active>
          <TabName><Txt $k={0.885}>PRESUPUESTO CHE...</Txt></TabName>
          <svg width="6" height="6"><path d="m.5.5 5 5m0-5-5 5" stroke="#555" strokeWidth="1.300" /></svg>
        </AcroTab>
        <Tool $ml={126.7}>
          <A s={19} w={2}><circle cx="12" cy="12" r="10.500" /><path d="M9 9.500C9 5.500 15 5.500 15 9.500c0 2-3 2.500-3 5M12 16.500v2" /></A>
        </Tool>
        <Tool $ml={-2.500}>
          <A s={17} c="#999" f="#999" w={1}><path d="M12 1c4 1 6 4 6 8v6l3 4H3l3-4V9c0-4 2-7 6-8zM9 20.500h6L12 23z" /></A>
        </Tool>
        <SignIn><Txt $k={1}>Iniciar sesión</Txt></SignIn>
      </AcroTabs>
      <AcroTools>
        <Tool $ml={-1}><A s={19} c="#b5b5b5"><path d="M2 2h16l4 4v16H2zM7 2v7h9V2M6 22v-8h12v8M13 4v3" /></A></Tool>
        <Tool><A s={21}><path d="m12 1.500 3.200 7.300 7.800.7-6 5.200 1.800 7.800L12 18.400 5.200 22.500 7 14.700 1 9.500l7.800-.7z" /></A></Tool>
        <Tool><A s={20}><path d="M8 18H6a5 5 0 0 1-.5-9.800A7 7 0 0 1 18.500 8 5 5 0 0 1 18 18h-2M12 23V11M8 15l4-4 4 4" /></A></Tool>
        <Tool><A s={20} f="#666"><path d="M6 7V2h12v5" fill="#fff" /><path d="M2 8h20v10H2z" /><path d="M6.500 13h11v9h-11z" fill="#fff" /><path d="M9 16h6M9 19h6" strokeWidth="1.500" /></A></Tool>
        <Tool><A s={21}><circle cx="10" cy="10" r="8" /><path d="m16 16 7 7" strokeWidth="3" /><path d="M5.500 10h2M9 10h2M12.500 10h2" /></A></Tool>
        <Tool><A s={19} c="#b5b5b5"><circle cx="12" cy="12" r="10.500" /><path d="M12 18V6M7.500 10.500 12 6l4.500 4.500" /></A></Tool>
        <Tool><A s={19}><circle cx="12" cy="12" r="10.500" /><path d="M12 6v12M7.500 13.500 12 18l4.500-4.500" /></A></Tool>
        <PageNo><Txt $from="center">1</Txt></PageNo>
        <PageTotal><Txt>/ 2</Txt></PageTotal>
        <ToolDivider />
        <Tool $ml={10}><A s={20} f="#e4e4e4"><path d="M2 2.500h20v14H13l-5 5.500v-5.500H2z" /><path d="M6 7.500h12M6 11.500h9" strokeWidth="1.600" /></A></Tool>
        <Tool><A s={20} f="#ddd"><path d="M10 22h14v-4H14z" stroke="none" fill="#d5d5d5" /><path d="m3 22 3-8L17 2l4 3.500L11 18zM6 14l5 4" /></A></Tool>
        <Tool><A s={20}><path d="M2 21 5 9l9-5 6 7-6 7zM2 21l8-8M14 4l3-3 5.500 6.500L20 11" /><path d="M14 22h2l1-3 1 3 1.500-2 1.500 2h2" strokeWidth="1.500" /></A></Tool>
        <Tool><A s={21}><path d="M1 3h5v8H1z" fill="#666" /><path d="M5 1h8l5 5v4H5z" fill="#e4e4e4" /><path d="M4 14v7h7M12 22l1-4 8-9 2 2-8 9z" /></A></Tool>
        <Tool $ml={41}><A s={21}><path d="m9 14 6-6M7 11l-4 4c-3 4 2 8 5 5l3-3M11 8l4-4c3-3 8 1 5 5l-3 3" /><path d="M11 22c-1-4 3-4 3-4 1-4 6-3 6 0 4 0 4 4 3 4z" fill="#555" stroke="none" /></A></Tool>
        <Tool><A s={20} w={1.8}><path d="M1 4h22v16H1zM1 4l11 9L23 4M1 20l8-9M23 20l-8-9" /></A></Tool>
        <Tool><A s={21} f="#555" c="#555"><circle cx="9" cy="6" r="4.500" /><path d="M1 20c0-7 4-6 8-8 4 2 5 2 6 4v4z" /><circle cx="18" cy="17" r="5.500" stroke="#fafafa" strokeWidth="1.500" /><path d="M18 14v6M15 17h6" stroke="#fff" strokeWidth="1.600" /></A></Tool>
      </AcroTools>
      <AcroBody>
        <NavStrip><Tri d="right" s={8} c="#777" /></NavStrip>
        <PageArea>
          <PageRow>
            <Page>
              {docLines.map((l) => {
                const [a, b] = l.t.split("|");
                return (
                  <Line key={l.t} $tone={l.tone} $gap={l.gap} $in={l.ind}>
                    <Txt $k={l.tone ? 0.917 : 0.916}>
                      {l.mark ? <Marked>{a}</Marked> : a}
                      {b && <><Caret />{b}</>}
                    </Txt>
                  </Line>
                );
              })}
            </Page>
            <PageScroll>
              <svg width="7" height="5"><path d="m.5 4.500 3-3 3 3" fill="none" stroke="#555" strokeWidth="1.300" /></svg>
              <PageThumb />
              <svg width="7" height="5"><path d="m.5.500 3 3 3-3" fill="none" stroke="#555" strokeWidth="1.300" /></svg>
            </PageScroll>
          </PageRow>
          <SizeRow>
            <SizeText><Txt $k={0.886}>209.9 x 296.7 mm</Txt></SizeText>
            <svg width="5" height="7"><path d="m4 .500-3 3 3 3" fill="none" stroke="#444" strokeWidth="1.400" /></svg>
            <SizeThumb />
            <svg width="5" height="7"><path d="m1 .500 3 3-3 3" fill="none" stroke="#444" strokeWidth="1.400" /></svg>
          </SizeRow>
        </PageArea>
        <Gutter><Tri d="left" s={8} c="#666" /></Gutter>
        <ToolRail>
          {railIcons.map((icon) => <RailSlot key={icon.key}>{icon}</RailSlot>)}
        </ToolRail>
      </AcroBody>
    </Acrobat>
  );
}

const tasks: { icon: React.ReactNode; open?: boolean; hot?: boolean }[] = [
  { icon: <svg width="15" height="20" viewBox="0 0 15 20" fill="#fff"><path d="M0 5 6.500 4v5.500H0zM7.500 3.800 15 2.500v7H7.500zM0 10.500h6.500V16L0 15zM7.500 10.500H15v7l-7.500-1.300z" /></svg> },
  { icon: <svg width="20" height="20" viewBox="0 0 20 20" fill="none" stroke="#fff" strokeWidth="1.800"><circle cx="11.500" cy="8" r="6.500" /><path d="M7 13 1 19" /></svg> },
  { icon: <svg width="19" height="20" viewBox="0 0 19 20"><path d="M0 2h7l1.500 2H18v14H0z" fill="#efb73e" /><path d="M0 7h18v11H0z" fill="#f9d876" /><path d="M3 18v-7h12v7h-3.500v-3.500h-5V18z" fill="#4193d1" /></svg>, open: true },
  { icon: <svg width="18" height="20" viewBox="0 0 18 20"><path d="M5 0h8l4 4-1 10-7 6-7-6L1 4z" fill="#f0512a" /><path d="M4 4l3 .500h4L14 4l1 3-3 6-3 2-3-2-3-6z" fill="#fff" /><path d="m6 7 2 1-.500 2zM12 7l-2 1 .500 2zM8 12h2l-1 1.500z" fill="#f0512a" /></svg> },
  { icon: <svg width="20" height="20" viewBox="0 0 20 20"><circle cx="10" cy="10" r="10" fill="#36a852" /><path d="M1.300 5a10 10 0 0 1 17.400 0H10L6 12z" fill="#e5392f" /><path d="M18.700 5A10 10 0 0 1 9 20l5-8-4-7z" fill="#fbc116" /><circle cx="10" cy="10" r="4.800" fill="#fff" /><circle cx="10" cy="10" r="3.800" fill="#4285f4" /></svg>, open: true },
  { icon: <svg width="20" height="20" viewBox="0 0 20 20"><rect width="20" height="20" fill="#c8102e" /><text x="10" y="15.500" fontSize="15" fontFamily="Liberation Sans" fill="#fff" textAnchor="middle" textLength="17" lengthAdjust="spacingAndGlyphs">P6</text></svg> },
  { icon: <svg width="20" height="20" viewBox="0 0 20 20"><path d="M7 0h12v12H7z" fill="#dd3a35" /><circle cx="6" cy="14" r="6" fill="#27a5c9" /><path d="m13 7 6 8.500H8.500z" fill="#fbd21f" /></svg>, open: true },
  { icon: <svg width="20" height="20" viewBox="0 0 20 20" fill="none"><path d="M4 19C1 10 5 3 17 1c-2 1-1 3 1 6-4-2-8-1-10 3-1 3 1 4 1 6-1-1-2-1-5 3z" stroke="#5c86bd" strokeWidth="1.300" /><text x="8" y="17" fontSize="6" fill="#d0302f">2024</text></svg>, open: true },
  { icon: <InsurLogo s={20} />, open: true, hot: true },
  { icon: <svg width="18" height="20" viewBox="0 0 18 20" fill="#e8e8e8"><path d="M9 0c2 2 3 4 3 7v4l1-1V7l1.500-3L16 7v7l2 3v3h-4.500l-1-1.500-1 1.500h-5l-1-1.500-1 1.500H0v-3l2-3V7l1.500-3L5 7v3l1 1V7c0-3 1-5 3-7z" /><path d="M9 4v12M7.500 9v5M10.500 9v5" stroke="#555" strokeWidth=".8" /></svg>, open: true },
  { icon: <svg width="20" height="20" viewBox="0 0 20 20"><circle cx="10.500" cy="10" r="9.500" fill="#d35230" /><path d="M10.500.5a9.500 9.500 0 0 1 9.500 9.500h-9.500z" fill="#f08a69" /><rect y="5" width="10" height="10" rx="1" fill="#b7361a" /><text x="5" y="13" fontSize="8" fontWeight="bold" fill="#fff" textAnchor="middle">P</text></svg>, open: true },
  { icon: <svg width="20" height="20" viewBox="0 0 20 20"><circle cx="10" cy="10" r="10" fill="#1861f0" /><text x="10" y="12" fontSize="6.500" fontWeight="600" fill="#fff" textAnchor="middle">zoom</text></svg>, open: true },
  { icon: <svg width="19" height="20" viewBox="0 0 19 20"><rect width="19" height="20" rx="3.500" fill="#b11c14" /><path d="M4.500 15c-1-1 6-4 9.500-3 2 .7-2 1.500-4-2S8 4 9.200 4c1.500 0 0 6-4.700 11z" stroke="#fff" fill="none" strokeWidth="1.300" /></svg>, open: true },
];

export default function App() {
  return (
    <>
      <GlobalStyle />
      <Screen>
        <Budget />
        <AcrobatWindow />
        <Menu>
          {menu.map((m) => (
            <MenuItem key={m.label} $hot={m.label === "Copiar"}>
              <MenuIcon>{m.icon}</MenuIcon>
              <Txt $k={0.905}>{m.label}</Txt>
              {m.sub && <Tri d="right" s={7} c="#111" />}
            </MenuItem>
          ))}
        </Menu>
        <Pointer width="8" height="13" viewBox="0 0 8 13">
          <path d="M.5.500v10l2.300-2.200 1.600 3.700 1.600-.8-1.600-3.500h3z" fill="#fff" stroke="#444" strokeWidth=".8" />
        </Pointer>
        <Watermark>zoom</Watermark>
        <Taskbar>
          {tasks.map((t, i) => (
            <Task key={i} $open={t.open} $hot={t.hot}>{t.icon}</Task>
          ))}
          <Tray>
            <TrayIcon $w={20}><svg width="11" height="6"><path d="m.5 5.500 5-5 5 5" stroke="#eee" fill="none" strokeWidth="1.200" /></svg></TrayIcon>
            <TrayIcon $w={20}><svg width="13" height="14" viewBox="0 0 13 14" fill="none" stroke="#ddd"><path d="M.5 2.500 12.500.5v12L.5 13zM4 9V6c0-2 5-2 5 0s-4 1.500-4 3.500h3" /><circle cx="10" cy="11" r="3" fill="#3a83c9" stroke="none" /></svg></TrayIcon>
            <TrayIcon $w={20}><svg width="9" height="14" viewBox="0 0 9 14" fill="#fff"><rect x="2" width="5" height="9" rx="1.500" /><path d="M0 7h1v3h7V7h1v4H5.500v1.500H8V14H1v-1.500h2.500V11H0z" /></svg></TrayIcon>
            <TrayIcon $w={20}><svg width="13" height="10" viewBox="0 0 13 10" fill="none" stroke="#eee"><path d="M5 2.500h7.500v6H3.500V6M1.500 0v2M4 0v2M.5 2.500h4v2h-4zM2.500 5v4" /></svg></TrayIcon>
            <TrayIcon $w={20}><svg width="12" height="12" viewBox="0 0 12 12" fill="none" stroke="#bbb"><path d="M1 10C1 5 5 1 11 1M4 11c0-4 3-7 7-7M7 11.500C7 9 9 7 11 7M9.500 11.500 11 10" /></svg></TrayIcon>
            <TrayIcon $w={20}><svg width="14" height="11" viewBox="0 0 14 11" fill="none" stroke="#eee"><path d="M.5 4h2L5.500 1v9l-3-3h-2zM7.500 4c1 1 1 2 0 3M9.500 2.500c2 2 2 4 0 6M11.500 1c2.500 3 2.500 6 0 9" /></svg></TrayIcon>
            <TrayIcon $w={29}><Txt $from="center">ESP</Txt></TrayIcon>
            <Clock>
              <Txt $from="center">07:31 p. m.</Txt>
              <Txt $from="center">24/01/2026</Txt>
            </Clock>
            <TrayIcon $w={29}><svg width="14" height="13" viewBox="0 0 14 13" fill="none" stroke="#eee"><path d="M7.500 11.500 6 10H.5V.5h13V6M9 11c3 2.500 6-1 3.500-4 0 2-1 3.500-3.500 4z" /></svg></TrayIcon>
          </Tray>
        </Taskbar>
      </Screen>
    </>
  );
}
